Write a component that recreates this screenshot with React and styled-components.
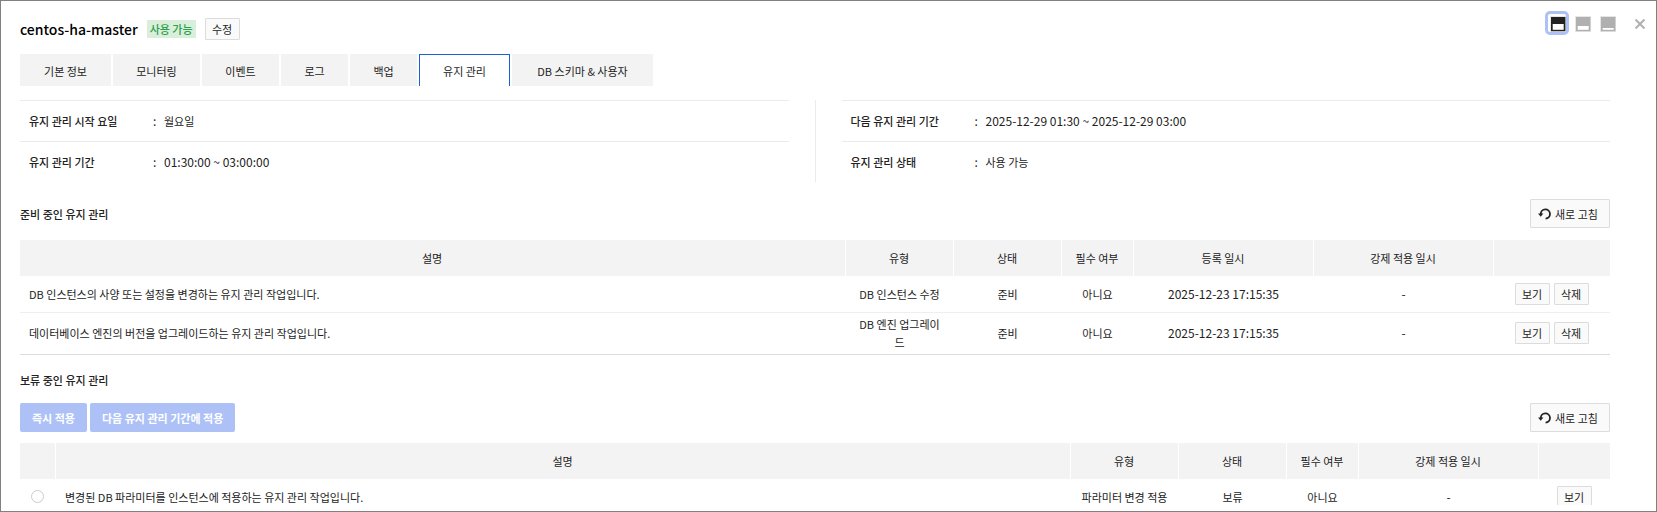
import React, { useState } from 'react';
import styled, { createGlobalStyle } from 'styled-components';

const TABS = [
  { name: '기본 정보', width: 91 },
  { name: '모니터링', width: 87 },
  { name: '이벤트', width: 77 },
  { name: '로그', width: 67 },
  { name: '백업', width: 67 },
  { name: '유지 관리', width: 91 },
  { name: 'DB 스키마 & 사용자', width: 141 },
];

const READY_ROWS = [
  {
    id: 1,
    description: 'DB 인스턴스의 사양 또는 설정을 변경하는 유지 관리 작업입니다.',
    type: 'DB 인스턴스 수정',
    status: '준비',
    required: '아니요',
    createdAt: '2025-12-23 17:15:35',
    forcedAt: '-',
  },
  {
    id: 2,
    description: '데이터베이스 엔진의 버전을 업그레이드하는 유지 관리 작업입니다.',
    type: 'DB 엔진 업그레이드',
    status: '준비',
    required: '아니요',
    createdAt: '2025-12-23 17:15:35',
    forcedAt: '-',
  },
];

const PENDING_ROWS = [
  {
    id: 3,
    description: '변경된 DB 파라미터를 인스턴스에 적용하는 유지 관리 작업입니다.',
    type: '파라미터 변경 적용',
    status: '보류',
    required: '아니요',
    forcedAt: '-',
  },
];

// 패널 크기 아이콘 (흰 영역의 높이만 다름)
const PANEL_SIZES = [
  { id: 'large', label: '크게 보기', inner: 5.8 },
  { id: 'medium', label: '중간 보기', inner: 3.8 },
  { id: 'small', label: '작게 보기', inner: 1.8 },
];

const PanelIcon = ({ inner }) => (
  <svg width="18" height="18" viewBox="0 0 18 18">
    <rect x="2.5" y="2.5" width="15" height="15" fill="none" stroke="#e6e6e6" />
    <rect x="3" y="3" width="14.4" height="14.2" fill="currentColor" />
    <rect x="4.7" y={15.8 - inner} width="11" height={inner} fill="#fff" />
  </svg>
);

const CloseIcon = () => (
  <svg width="10" height="10" viewBox="0 0 10 10" fill="none" stroke="#b0b0b0" strokeWidth="2">
    <path d="M0.5 0.5L9.5 9.5M9.5 0.5L0.5 9.5" />
  </svg>
);

const RefreshIcon = () => (
  <svg width="13" height="12" viewBox="0 0 13 12">
    <path d="M2.8 6.2A4.6 4.6 0 1 1 7.6 10.6" fill="none" stroke="#222" strokeWidth="1.8" />
    <path d="M0 5.4H5.4L2.7 8.8Z" fill="#222" />
  </svg>
);

const RefreshButton = () => (
  <StRefreshButton type="button">
    <RefreshIcon />
    새로 고침
  </StRefreshButton>
);

const InfoItem = ({ label, value, latin }) => (
  <StInfoItem>
    <dt>{label}</dt>
    <StInfoValue $latin={latin}>{value}</StInfoValue>
  </StInfoItem>
);

const App = () => {
  const [activeTab, setActiveTab] = useState('유지 관리');
  const [panelSize, setPanelSize] = useState('large');
  const [selected, setSelected] = useState(null);

  return (
    <>
      <GlobalStyle />
      <StPanel>
        <StHeader>
          <StTitleBox>
            <StTitle>centos-ha-master</StTitle>
            <StBadge>사용 가능</StBadge>
            <StSmallButton type="button">수정</StSmallButton>
          </StTitleBox>
          <StPanelControls>
            {PANEL_SIZES.map(({ id, label, inner }) => (
              <StPanelButton
                key={id}
                type="button"
                aria-label={label}
                $isActive={panelSize === id}
                onClick={() => setPanelSize(id)}
              >
                <PanelIcon inner={inner} />
              </StPanelButton>
            ))}
            <StCloseButton type="button" aria-label="닫기">
              <CloseIcon />
            </StCloseButton>
          </StPanelControls>
        </StHeader>

        <StTabs>
          {TABS.map(({ name, width }) => (
            <StTab key={name} type="button" $width={width} $isActive={activeTab === name} onClick={() => setActiveTab(name)}>
              {name}
            </StTab>
          ))}
        </StTabs>

        <StBody>
          <StInfoGrid>
            <StInfoList>
              <InfoItem label="유지 관리 시작 요일" value="월요일" />
              <InfoItem label="유지 관리 기간" value="01:30:00 ~ 03:00:00" latin />
            </StInfoList>
            <StDivider />
            <StInfoList>
              <InfoItem label="다음 유지 관리 기간" value="2025-12-29 01:30 ~ 2025-12-29 03:00" latin />
              <InfoItem label="유지 관리 상태" value="사용 가능" />
            </StInfoList>
          </StInfoGrid>

          <StSectionBar>
            <StSectionTitle>준비 중인 유지 관리</StSectionTitle>
            <RefreshButton />
          </StSectionBar>
          <StTable>
            <colgroup>
              <col />
              <StCol $width={108} />
              <StCol $width={108} />
              <StCol $width={72} />
              <StCol $width={180} />
              <StCol $width={180} />
              <StCol $width={116} />
            </colgroup>
            <thead>
              <tr>
                <StTh>설명</StTh>
                <StTh>유형</StTh>
                <StTh>상태</StTh>
                <StTh>필수 여부</StTh>
                <StTh>등록 일시</StTh>
                <StTh>강제 적용 일시</StTh>
                <StTh />
              </tr>
            </thead>
            <tbody>
              {READY_ROWS.map((row) => (
                <tr key={row.id}>
                  <StTd $align="left">{row.description}</StTd>
                  <StTd>{row.type}</StTd>
                  <StTd>{row.status}</StTd>
                  <StTd>{row.required}</StTd>
                  <StTd $latin>{row.createdAt}</StTd>
                  <StTd $latin>{row.forcedAt}</StTd>
                  <StTd>
                    <StRowActions>
                      <StSmallButton type="button">보기</StSmallButton>
                      <StSmallButton type="button">삭제</StSmallButton>
                    </StRowActions>
                  </StTd>
                </tr>
              ))}
            </tbody>
          </StTable>

          <StPendingTitle>보류 중인 유지 관리</StPendingTitle>
          <StActionBar>
            <StApplyGroup>
              <StApplyButton type="button" disabled={!selected}>
                즉시 적용
              </StApplyButton>
              <StApplyButton type="button" disabled={!selected}>
                다음 유지 관리 기간에 적용
              </StApplyButton>
            </StApplyGroup>
            <RefreshButton />
          </StActionBar>
          <StTable>
            <colgroup>
              <StCol $width={36} />
              <col />
              <StCol $width={108} />
              <StCol $width={108} />
              <StCol $width={72} />
              <StCol $width={180} />
              <StCol $width={71} />
            </colgroup>
            <thead>
              <tr>
                <StTh />
                <StTh>설명</StTh>
                <StTh>유형</StTh>
                <StTh>상태</StTh>
                <StTh>필수 여부</StTh>
                <StTh>강제 적용 일시</StTh>
                <StTh />
              </tr>
            </thead>
            <tbody>
              {PENDING_ROWS.map((row) => (
                <tr key={row.id}>
                  <StTd>
                    <StRadio
                      type="radio"
                      name="pending"
                      aria-label={row.description}
                      checked={selected === row.id}
                      onChange={() => setSelected(row.id)}
                    />
                  </StTd>
                  <StTd $align="left">{row.description}</StTd>
                  <StTd>{row.type}</StTd>
                  <StTd>{row.status}</StTd>
                  <StTd>{row.required}</StTd>
                  <StTd $latin>{row.forcedAt}</StTd>
                  <StTd>
                    <StRowActions>
                      <StSmallButton type="button">보기</StSmallButton>
                    </StRowActions>
                  </StTd>
                </tr>
              ))}
            </tbody>
          </StTable>
        </StBody>
      </StPanel>
    </>
  );
};

export default App;

const GlobalStyle = createGlobalStyle`
  * {
    box-sizing: border-box;
  }
  body {
    margin: 0;
    background: #fff;
    color: #222;
    font-family: 'Noto Sans CJK KR', sans-serif;
    font-size: 11px;
    line-height: 18px;
  }
  button {
    margin: 0;
    padding: 0;
    font: inherit;
    color: inherit;
    cursor: pointer;
  }
  h1, h2, dl, dd {
    margin: 0;
  }
`;

const StPanel = styled.section`
  display: flex;
  flex-direction: column;
  height: 100vh;
  padding-bottom: 6px;
  border: 1px solid #808080;
`;

// 상단

const StHeader = styled.header`
  display: flex;
  justify-content: space-between;
  align-items: flex-start;
  padding: 10px 11px 0 19px;
`;

const StTitleBox = styled.div`
  display: flex;
  align-items: center;
  gap: 9px;
  padding-top: 7px;
`;

const StTitle = styled.h1`
  font-size: 14px;
  font-weight: 500;
  line-height: 18px;
  color: #000;
`;

const StBadge = styled.span`
  height: 18px;
  padding: 0 3px;
  background: #d9efdc;
  color: #2ba04b;
  font-weight: 500;
`;

const StSmallButton = styled.button`
  min-width: 35px;
  height: 22px;
  padding: 0 6px;
  border: 1px solid #dcdcdc;
  border-radius: 1px;
  background: #fafafa;
`;

const StPanelControls = styled.div`
  display: flex;
  align-items: center;
  gap: 1px;
`;

const StPanelButton = styled.button`
  display: flex;
  justify-content: center;
  align-items: center;
  width: 24px;
  height: 24px;
  border: 3px solid ${({ $isActive }) => ($isActive ? '#adc1f7' : 'transparent')};
  border-radius: 5px;
  background: #fff;
  color: ${({ $isActive }) => ($isActive ? '#222' : '#b0b0b0')};
`;

const StCloseButton = styled.button`
  display: flex;
  margin-left: 15px;
  padding-top: 2px;
  border: 0;
  background: none;
`;

// 탭

const StTabs = styled.nav`
  display: flex;
  gap: 2px;
  padding: 14px 19px 0;
`;

const StTab = styled.button`
  width: ${({ $width }) => $width}px;
  height: 32px;
  border: 1px solid ${({ $isActive }) => ($isActive ? '#1a5fdc' : '#f3f3f3')};
  border-bottom: 0;
  background: ${({ $isActive }) => ($isActive ? '#fff' : '#f3f3f3')};
`;

// 본문

const StBody = styled.main`
  flex: 1;
  min-height: 0;
  overflow: hidden;
  padding: 14px 46px 0 19px;
`;

const StInfoGrid = styled.div`
  display: grid;
  grid-template-columns: 1fr 1px 1fr;
  column-gap: 26px;
`;

const StInfoList = styled.dl``;

const StDivider = styled.div`
  background: #ebebeb;
`;

const StInfoItem = styled.div`
  display: flex;
  align-items: center;
  height: 41px;
  padding-left: 9px;
  border-top: 1px solid #ebebeb;
  dt {
    width: 124px;
    font-weight: 500;
  }
`;

const StInfoValue = styled.dd`
  font-size: ${({ $latin }) => ($latin ? '12px' : '11px')};
  &::before {
    content: ':';
    display: inline-block;
    width: 11px;
    font-size: 12px;
  }
`;

const StSectionBar = styled.div`
  display: flex;
  justify-content: space-between;
  align-items: center;
  margin: 17px 0 12px;
`;

const StSectionTitle = styled.h2`
  font-size: 11px;
  font-weight: 500;
`;

const StPendingTitle = styled(StSectionTitle)`
  margin-top: 16px;
`;

const StActionBar = styled(StSectionBar)`
  margin: 14px 0 11px;
`;

const StRefreshButton = styled.button`
  display: flex;
  align-items: center;
  gap: 4px;
  width: 80px;
  height: 29px;
  padding-left: 7px;
  border: 1px solid #dcdcdc;
  border-radius: 1px;
  background: #fafafa;
`;

const StApplyGroup = styled.div`
  display: flex;
  gap: 3px;
`;

const StApplyButton = styled.button`
  height: 29px;
  padding: 0 12px;
  border: 0;
  border-radius: 2px;
  background: #3769ea;
  color: #fff;
  font-weight: 700;
  &:disabled {
    background: #adc1f7;
    cursor: default;
  }
`;

// 표

const StTable = styled.table`
  width: 100%;
  table-layout: fixed;
  border-collapse: separate;
  border-spacing: 0;
  border-bottom: 1px solid #dcdcdc;
`;

const StCol = styled.col`
  width: ${({ $width }) => $width}px;
`;

const StTh = styled.th`
  height: 36px;
  padding: 0 1px 0 0;
  border-right: 1px solid #fff;
  background: #f3f3f3;
  font-weight: 400;
  &:last-child {
    border-right: 0;
  }
`;

const StTd = styled.td`
  height: 36px;
  padding: 2px 10px 3px 9px;
  font-size: ${({ $latin }) => ($latin ? '12px' : '11px')};
  text-align: ${({ $align }) => $align || 'center'};
  word-break: break-all;
  tr + tr > & {
    border-top: 1px solid #efefef;
  }
`;

const StRowActions = styled.div`
  display: flex;
  justify-content: center;
  gap: 4px;
`;

const StRadio = styled.input`
  display: block;
  appearance: none;
  width: 13px;
  height: 13px;
  margin: 0 auto;
  border: 1px solid #ccc;
  border-radius: 50%;
  background: #fff;
  &:checked {
    border: 4px solid #3769ea;
  }
`;
